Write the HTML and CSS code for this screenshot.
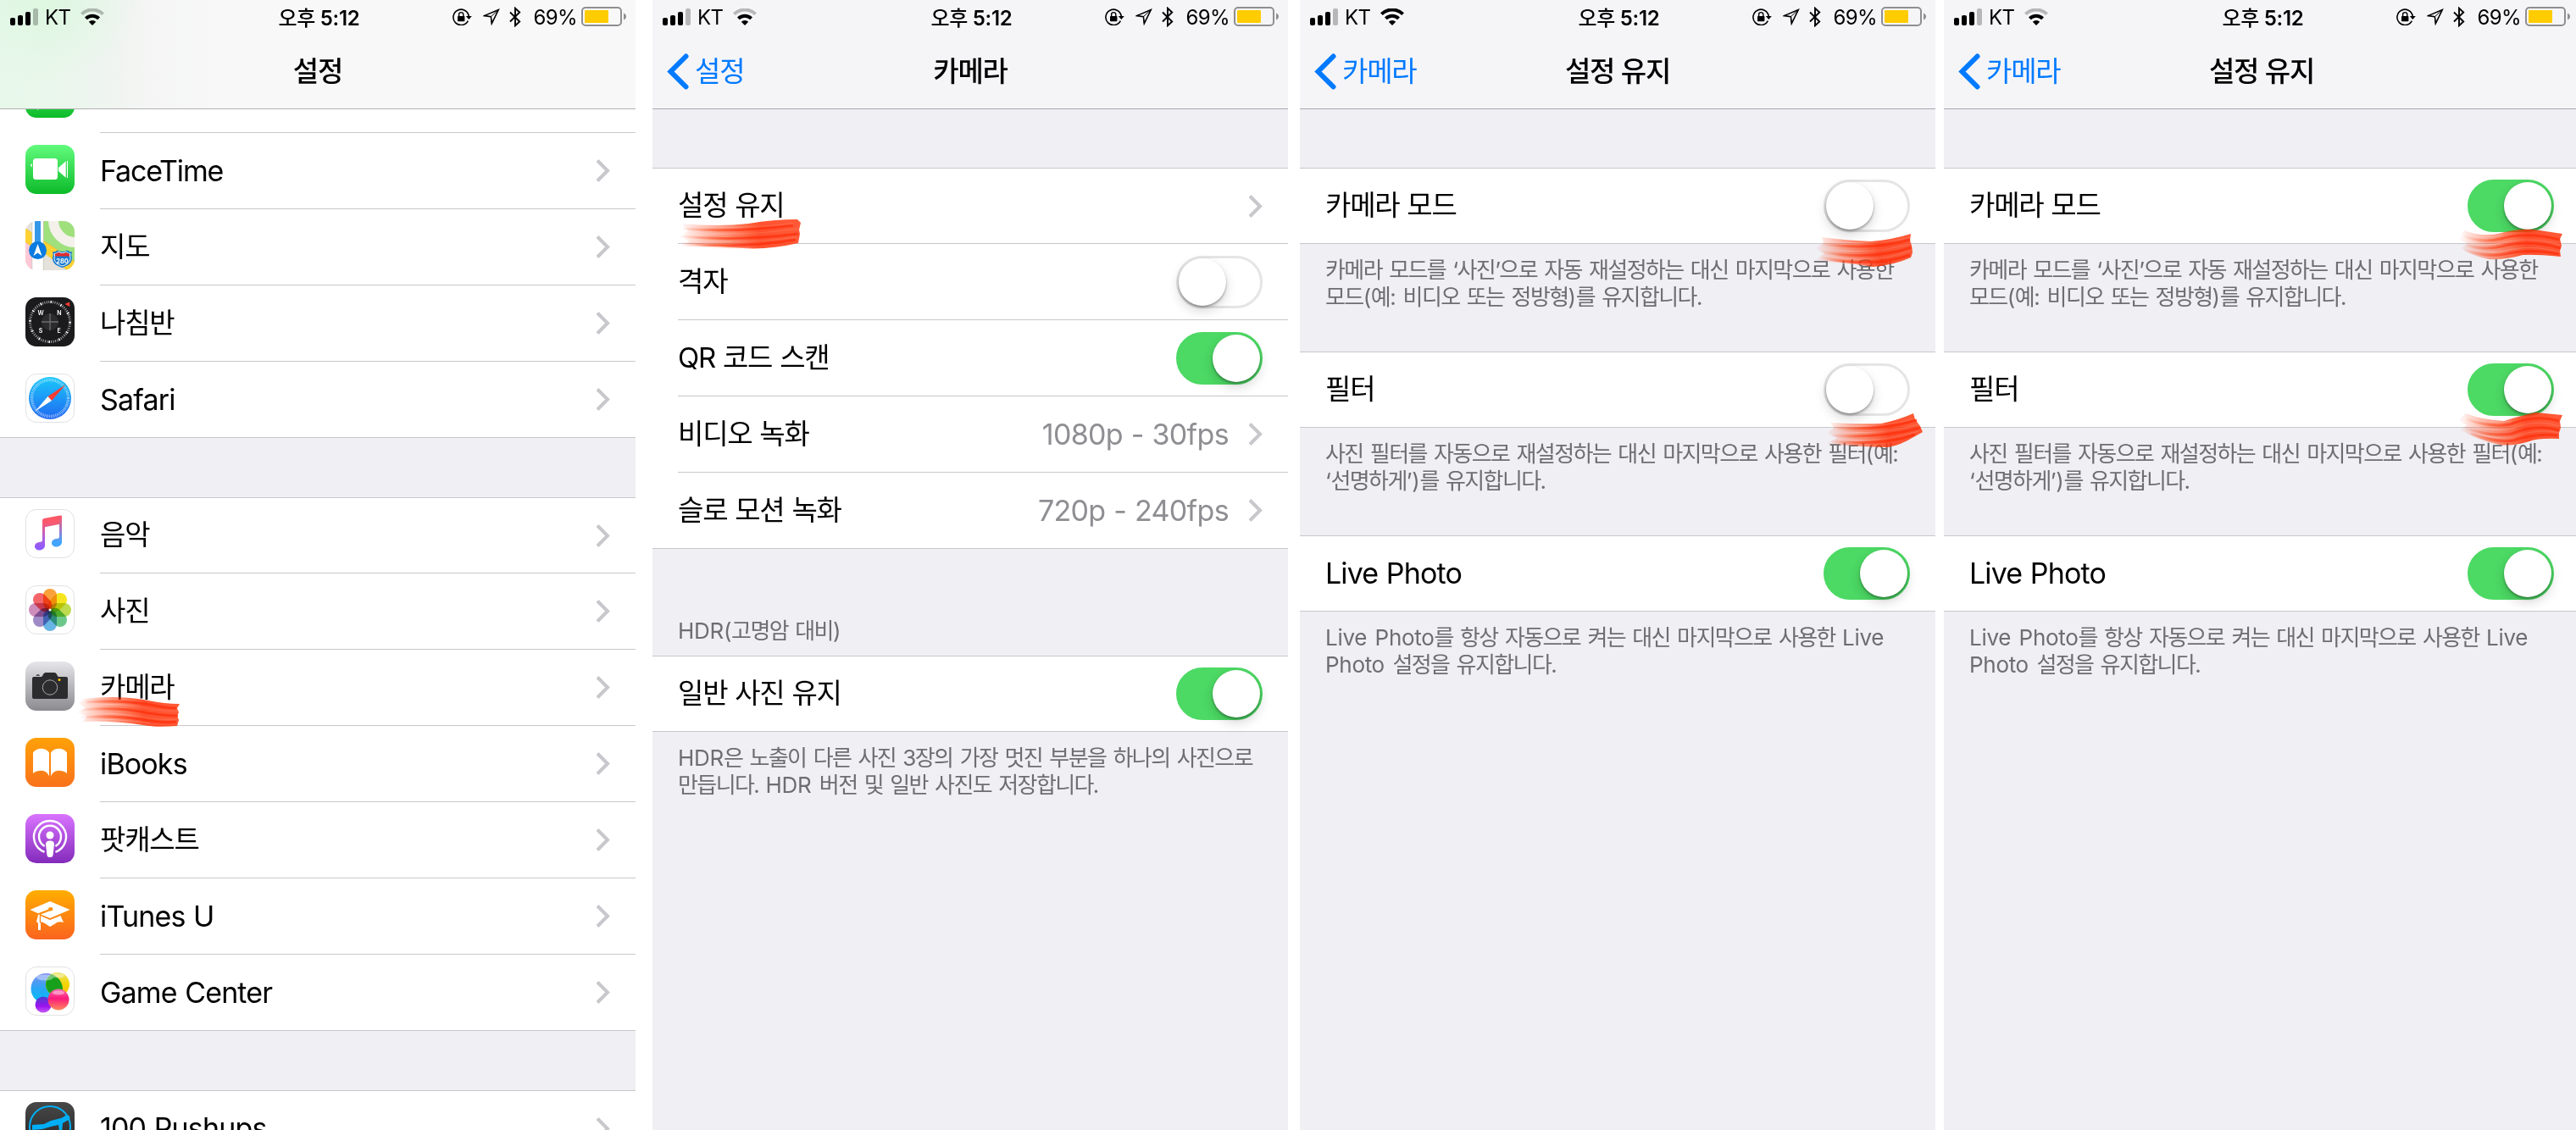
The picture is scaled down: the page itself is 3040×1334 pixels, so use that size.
FILE: index.html
```html
<!DOCTYPE html>
<html lang="ko">
<head>
<meta charset="utf-8">
<title>설정</title>
<link rel="stylesheet" href="styles.css">
</head>
<body>
<svg class="defs" width="0" height="0" aria-hidden="true">
  <defs>
    <linearGradient id="g-green" x1="0" y1="0" x2="0" y2="1"><stop offset="0" stop-color="#62fb7d"/><stop offset="1" stop-color="#0cbb29"/></linearGradient>
    <linearGradient id="g-safari" x1="0" y1="0" x2="0" y2="1"><stop offset="0" stop-color="#1bc8fb"/><stop offset="1" stop-color="#2068f2"/></linearGradient>
    <linearGradient id="g-music" gradientUnits="userSpaceOnUse" x1="32" y1="9" x2="32" y2="46"><stop offset="0" stop-color="#ff5763"/><stop offset=".2" stop-color="#f9596f"/><stop offset=".6" stop-color="#b860d2"/><stop offset="1" stop-color="#8f5bff"/></linearGradient>
    <linearGradient id="g-music2" gradientUnits="userSpaceOnUse" x1="40" y1="9" x2="40" y2="44"><stop offset="0" stop-color="#f9586c"/><stop offset=".45" stop-color="#a078c8"/><stop offset=".85" stop-color="#42a5ff"/></linearGradient>
    <linearGradient id="g-camera" x1="0" y1="0" x2="0" y2="1"><stop offset="0" stop-color="#e5e5ea"/><stop offset="1" stop-color="#8b8a8f"/></linearGradient>
    <linearGradient id="g-books" x1="0" y1="0" x2="0" y2="1"><stop offset="0" stop-color="#ffa108"/><stop offset="1" stop-color="#f9711b"/></linearGradient>
    <linearGradient id="g-pod" x1="0" y1="0" x2="0" y2="1"><stop offset="0" stop-color="#d973ff"/><stop offset="1" stop-color="#832bbb"/></linearGradient>
    <linearGradient id="g-itu" x1="0" y1="0" x2="0" y2="1"><stop offset="0" stop-color="#ffae00"/><stop offset="1" stop-color="#fb631f"/></linearGradient>
    <linearGradient id="g-gcblue" x1="0" y1="0" x2="0" y2="1"><stop offset="0" stop-color="#7f8ff0"/><stop offset=".5" stop-color="#2aa5f5"/><stop offset="1" stop-color="#00c2f5"/></linearGradient>
    <linearGradient id="g-gcyel" x1="0" y1="0" x2="0" y2="1"><stop offset="0" stop-color="#e9e36a"/><stop offset=".5" stop-color="#f3d500"/><stop offset="1" stop-color="#f9b800"/></linearGradient>
    <linearGradient id="g-gcpink" x1="0" y1="0" x2="0" y2="1"><stop offset="0" stop-color="#ff6fb0"/><stop offset=".45" stop-color="#fb1a7c"/><stop offset="1" stop-color="#ff8a5c"/></linearGradient>
    <linearGradient id="g-gcpur" x1="0" y1="0" x2="0" y2="1"><stop offset="0" stop-color="#4a3fd0"/><stop offset=".6" stop-color="#9c12ee"/><stop offset="1" stop-color="#c65cf5"/></linearGradient>
    <linearGradient id="g-dark" x1="0" y1="0" x2="0" y2="1"><stop offset="0" stop-color="#484848"/><stop offset="1" stop-color="#222"/></linearGradient>
    <linearGradient id="ink" x1="0" y1="0" x2="1" y2="0"><stop offset="0" stop-color="#ff3208" stop-opacity="0"/><stop offset=".3" stop-color="#ff3208" stop-opacity=".45"/><stop offset=".65" stop-color="#ff3208" stop-opacity=".85"/><stop offset="1" stop-color="#ff3208" stop-opacity=".8"/></linearGradient>
    <linearGradient id="bristle" x1="0" y1="0" x2="1" y2="0"><stop offset="0" stop-color="#ffd8cf" stop-opacity="0"/><stop offset=".3" stop-color="#ffd0c4" stop-opacity=".6"/><stop offset=".6" stop-color="#ff9a80" stop-opacity=".3"/><stop offset="1" stop-color="#ff9a80" stop-opacity=".3"/></linearGradient>
    <filter id="soft" x="-10%" y="-20%" width="120%" height="140%"><feGaussianBlur stdDeviation=".6"/></filter>
    <clipPath id="tile"><rect width="58" height="58" rx="13"/></clipPath>

    <symbol id="signal" viewBox="0 0 33 20"><rect y="11" width="6" height="9" rx="2"/><rect x="9" y="8" width="6" height="12" rx="2"/><rect x="18" y="4" width="6" height="16" rx="2"/><rect x="27" width="6" height="20" rx="2" opacity=".25"/></symbol>
    <symbol id="wifi" viewBox="0 0 28 20"><path class="arc" d="M1.4 6.6a18 18 0 0 1 25.2 0" fill="none" stroke="currentColor" stroke-width="4"/><path d="M6.4 11.8a10.8 10.8 0 0 1 15.2 0" fill="none" stroke="currentColor" stroke-width="4"/><path d="M14 20l-4.2-4.2a6 6 0 0 1 8.4 0z"/></symbol>
    <symbol id="lock" viewBox="0 0 23 20"><path d="M18.3 14.6A9.2 9.2 0 1 1 19.2 9" fill="none" stroke="currentColor" stroke-width="1.6"/><path d="M15.8 9h7l-3.5 4z"/><rect x="6" y="9" width="8.4" height="6.2" rx=".8"/><path d="M7.6 9.500V7.200a2.600 2.600 0 0 1 5.200 0v2.300" fill="none" stroke="currentColor" stroke-width="1.4"/></symbol>
    <symbol id="loc" viewBox="0 0 20 20"><path d="M18.300 1.500L1.500 8.600l7.900 1.100.9 8.200z" fill="none" stroke="currentColor" stroke-width="1.500"/><path d="M18.300 1.500L9.400 9.700l.9 8.200z" fill="none" stroke="currentColor" stroke-width="1"/></symbol>
    <symbol id="bt" viewBox="0 0 14 24"><path d="M1 6.500l11.200 11L7 22.300V1.700l5.200 4.800L1 17.500" fill="none" stroke="currentColor" stroke-width="1.900"/></symbol>
    <symbol id="battery" viewBox="0 0 54 24"><rect x="1" y="1" width="46" height="21" rx="4" fill="none" stroke="#8f8f92" stroke-width="2"/><rect x="4" y="4" width="28" height="15" rx="1" fill="#fc0"/><path d="M50 7.500c4 1.500 4 6.500 0 8z" fill="#8f8f92"/></symbol>
    <symbol id="chev" viewBox="0 0 17 27"><path d="M2 1.500L14 13.500 2 25.500" fill="none" stroke="#c7c7cc" stroke-width="4"/></symbol>
    <symbol id="back" viewBox="0 0 26 43"><path d="M22.500 3.500L4.500 21.500l18 18" fill="none" stroke="#007aff" stroke-width="6" stroke-linecap="round" stroke-linejoin="miter"/></symbol>
  </defs>
</svg>

<main class="board">

  <!-- Settings root -->
  <section class="phone">
    <header class="bar tinted">
      <div class="status">
        <div class="left"><svg class="i-signal"><use href="#signal"/></svg><span class="carrier">KT</span><svg class="i-wifi weak"><use href="#wifi"/></svg></div>
        <div class="time"><span class="ampm">오후</span> 5:12</div>
        <div class="right"><svg class="i-lock"><use href="#lock"/></svg><svg class="i-loc"><use href="#loc"/></svg><svg class="i-bt"><use href="#bt"/></svg><span class="pct">69%</span><svg class="i-batt"><use href="#battery"/></svg></div>
      </div>
      <div class="nav"><span></span><h1>설정</h1><span></span></div>
    </header>
    <div class="group scrolled">
      <div class="row app"><svg class="icon" viewBox="0 0 58 58"><rect width="58" height="58" rx="13" fill="url(#g-green)"/><path d="M15 44l-1 5 5-3z" fill="#fff"/></svg></div>
      <div class="row app"><svg class="icon" viewBox="0 0 58 58"><rect width="58" height="58" rx="13" fill="url(#g-green)"/><rect x="9" y="16" width="29" height="25" rx="3.500" fill="#fff"/><path d="M39 27l8.700-7.700v19.400L39 31zM49 19h1v20h-1zM7.700 22v4.500l-1.700-2v-1z" fill="#fff"/></svg><span class="label latin tight">FaceTime</span><svg class="chev"><use href="#chev"/></svg></div>
      <div class="row app"><svg class="icon" viewBox="0 0 58 58"><g clip-path="url(#tile)"><path fill="#e4e2da" d="M0 0h58v58H0z"/><path fill="#9fe07c" d="M21 0h37v48L21 23z"/><circle cx="59" cy="-1" r="26" fill="none" stroke="#f3f1ea" stroke-width="12"/><path fill="#ffd233" stroke="#f2b62a" stroke-width=".8" d="M-1 8l59 40v16L-1 24z"/><path fill="#e4e2da" d="M21 37l28 21H21z"/><path fill="#ffc9d6" d="M0 25l8 6v27H0z"/><path fill="#fff" d="M8 0h13v58H8z"/><path fill="#3497e8" d="M11 0h7v27h-7z"/><path d="M7.800 0v58M21.300 0v58" stroke="#c9c6be" stroke-width=".8"/><path fill="#1579cf" d="M32 36.500q4 0 5.500-2 6 3 12 0 1.500 2 5.500 2-1.500 4 0 7c0 7-5.500 9.500-11.500 11.500-6-2-11.500-4.500-11.500-11.500q1.500-3 0-7z"/><path fill="none" stroke="#fff" stroke-width="1" d="M34 38.500q3 0 4.500-2 5 2.500 10 0 1.500 2 4.500 2-1 3 0 5c0 5.500-4.500 8-9.500 9.500-5-1.500-9.500-4-9.500-9.500q1-2 0-5z"/><path fill="#e02d2d" d="M35 38.500q2.500 0 3.700-1.400 4.800 2 9.600 0 1.200 1.400 3.700 1.400v3H35z"/><text x="43.500" y="49.500" font-size="7.500" font-weight="700" fill="#fff" text-anchor="middle">280</text></g><circle cx="14.500" cy="34.500" r="10.500" fill="#0a7be0"/><path fill="#fff" d="M14.500 27l5 14-5-3.500-5 3.500z"/></svg><span class="label">지도</span><svg class="chev"><use href="#chev"/></svg></div>
      <div class="row app"><svg class="icon" viewBox="0 0 58 58"><rect width="58" height="58" rx="13" fill="#1b1b1d"/><circle cx="29" cy="29" r="10" fill="#2b2b2d"/><path d="M29 19v20M19 29h20" stroke="#6d6d6f" stroke-width="1.300"/><circle cx="29" cy="29" r="23.500" fill="none" stroke="#b4b4b6" stroke-width="3" stroke-dasharray=".9 1.561"/><circle cx="29" cy="29" r="23.500" fill="none" stroke="#fff" stroke-width="3" stroke-dasharray="1.400 10.904"/><path fill="#ff3b30" d="M46.500 8l5.500-2.500.3 5.500z"/><g fill="#fff" font-size="7" font-weight="600" text-anchor="middle"><text x="18" y="21">W</text><text x="40" y="21">N</text><text x="18" y="42">S</text><text x="39.500" y="42">E</text></g></svg><span class="label">나침반</span><svg class="chev"><use href="#chev"/></svg></div>
      <div class="row app"><svg class="icon" viewBox="0 0 58 58"><rect x=".5" y=".5" width="57" height="57" rx="12.500" fill="#fff" stroke="#e2e2e4"/><circle cx="29" cy="29" r="25" fill="url(#g-safari)"/><circle cx="29" cy="29" r="21.500" fill="none" stroke="#fff" stroke-opacity=".7" stroke-width="3.500" stroke-dasharray=".7 1.176"/><path fill="#ff3b30" d="M47.500 13L26.500 27l4.500 5z"/><path fill="#fff" d="M11.500 44.500L26.500 27l4.500 5z"/></svg><span class="label latin">Safari</span><svg class="chev"><use href="#chev"/></svg></div>
    </div>
    <div class="group">
      <div class="row app"><svg class="icon" viewBox="0 0 58 58"><rect x=".5" y=".5" width="57" height="57" rx="12.500" fill="#fff" stroke="#e2e2e4"/><path fill="url(#g-music)" d="M20 13.500q0-2 2-2.400L41 7.600q2-.3 2 1.400v8.200l-20 4V43c0 3-3 5.500-6.500 5.500-3.300 0-5.500-2-5.500-4.500 0-2.800 2.500-4.500 5.500-4.900 2.700-.3 3.500-.8 3.500-2.600z"/><path fill="url(#g-music2)" d="M40 9l3-1v31c0 3-3 5.500-6.500 5.500-3.300 0-5.500-2-5.500-4.500 0-2.800 2.500-4.500 5.500-4.900 2.700-.3 3.500-.8 3.500-2.600z"/></svg><span class="label">음악</span><svg class="chev"><use href="#chev"/></svg></div>
      <div class="row app"><svg class="icon" viewBox="0 0 58 58"><rect x=".5" y=".5" width="57" height="57" rx="12.500" fill="#fff" stroke="#e2e2e4"/><g class="petals"><rect x="21" y="4" width="16" height="25" rx="8" fill="#f9a13a"/><rect x="21" y="4" width="16" height="25" rx="8" fill="#f6e41f" transform="rotate(45 29 29)"/><rect x="21" y="4" width="16" height="25" rx="8" fill="#bedb4f" transform="rotate(90 29 29)"/><rect x="21" y="4" width="16" height="25" rx="8" fill="#6cc78b" transform="rotate(135 29 29)"/><rect x="21" y="4" width="16" height="25" rx="8" fill="#68b4e4" transform="rotate(180 29 29)"/><rect x="21" y="4" width="16" height="25" rx="8" fill="#9d8ac6" transform="rotate(225 29 29)"/><rect x="21" y="4" width="16" height="25" rx="8" fill="#cf8dbb" transform="rotate(270 29 29)"/><rect x="21" y="4" width="16" height="25" rx="8" fill="#f4656a" transform="rotate(315 29 29)"/></g><circle cx="29" cy="29" r="1.500" fill="#fff"/></svg><span class="label">사진</span><svg class="chev"><use href="#chev"/></svg></div>
      <div class="row app"><svg class="icon" viewBox="0 0 58 58"><rect width="58" height="58" rx="13" fill="url(#g-camera)"/><path fill="#2c2c2e" d="M10 18h7.500c2 0 2.500-.8 3.200-2.300.8-1.900 1.600-2.700 3.300-2.700h10c1.700 0 2.500.8 3.300 2.700.7 1.500 1.200 2.300 3.200 2.300H48q2 0 2 2v22q0 2-2 2H10q-2 0-2-2V20q0-2 2-2zM12.500 16.700q.3-1.500 1.500-1.500h1.500q1.200 0 1.500 1.500z"/><circle cx="29" cy="30.500" r="8.700" fill="none" stroke="#a9a9ab"/><circle cx="40" cy="21.500" r="1.500" fill="#ffc800"/></svg><span class="label">카메라</span><svg class="chev"><use href="#chev"/></svg></div>
      <div class="row app"><svg class="icon" viewBox="0 0 58 58"><rect width="58" height="58" rx="13" fill="url(#g-books)"/><path fill="#fff" d="M9 17.500c2-3 5.500-4.800 9.500-4.800s7.800 1.900 9.500 4.800v28c-1.500-4-5-6.700-9.500-6.700-3.600 0-7 1-9.500 3.200zM49 17.500c-2-3-5.500-4.800-9.500-4.800S31.700 14.600 30 17.500v28c1.500-4 5-6.700 9.500-6.700 3.600 0 7 1 9.500 3.200z"/></svg><span class="label latin">iBooks</span><svg class="chev"><use href="#chev"/></svg></div>
      <div class="row app"><svg class="icon" viewBox="0 0 58 58"><rect width="58" height="58" rx="13" fill="url(#g-pod)"/><g fill="none" stroke="#fff" stroke-width="2.400"><path d="M22.500 44.800a19 19 0 1 1 13 0"/><path d="M22.600 38a13 13 0 1 1 12.800 0"/></g><circle cx="29" cy="25" r="4.500" fill="#fff"/><path fill="#fff" d="M24 36c0-3.500 2-4.500 5-4.500s5 1 5 4.500l-1.500 12.500c-.3 2-1.500 2.500-3.500 2.500s-3.200-.5-3.500-2.500z"/></svg><span class="label">팟캐스트</span><svg class="chev"><use href="#chev"/></svg></div>
      <div class="row app"><svg class="icon" viewBox="0 0 58 58"><rect width="58" height="58" rx="13" fill="url(#g-itu)"/><path fill="#fff" d="M29 13l23.500 10L29 33 18 28.500l11-4.200a2.600 2.200 0 1 0-1.800-1.700L15 27.300 5.500 23zM18 30.300L29 35l12.500-5 3.500 8c-4.500-1.500-7.500-.5-10 1.500L29 43l-5.500-3.500c-2-1.500-3.500-2-5.500-2zM15 29l1.800-.6V38l1.200 1v8h-3v-8l-2-2z"/></svg><span class="label latin">iTunes U</span><svg class="chev"><use href="#chev"/></svg></div>
      <div class="row app"><svg class="icon" viewBox="0 0 58 58"><rect x=".5" y=".5" width="57" height="57" rx="12.500" fill="#fff" stroke="#e2e2e4"/><circle cx="24.500" cy="26" r="18" fill="url(#g-gcblue)"/><circle cx="38" cy="21" r="14" fill="url(#g-gcyel)"/><path d="M26.500 13A14 14 0 0 0 42.200 34.300 18 18 0 0 0 31 9.200a14 14 0 0 0-4.500 3.800z" fill="#18a01c"/><circle cx="21" cy="45" r="9.500" fill="url(#g-gcpur)"/><circle cx="39" cy="39" r="12.500" fill="url(#g-gcpink)"/><g fill="#fff" opacity=".4"><ellipse cx="23" cy="13" rx="10" ry="3.500"/><ellipse cx="38" cy="11" rx="8" ry="2.500"/><ellipse cx="39" cy="31" rx="7" ry="2.500"/></g></svg><span class="label latin">Game Center</span><svg class="chev"><use href="#chev"/></svg></div>
    </div>
    <div class="group">
      <div class="row app"><svg class="icon" viewBox="0 0 58 58"><rect width="58" height="58" rx="13" fill="url(#g-dark)"/><circle cx="29" cy="29" r="24" fill="none" stroke="#00aef5" stroke-width="2"/><path fill="#00aef5" d="M8 27l14-1 8-4 12-3 4-2c1-2 5-2 6 0s0 5-3 5l-5 3-1 10h-3l-1-8-9 2-10 3-12 1z"/></svg><span class="label latin">100 Pushups</span><svg class="chev"><use href="#chev"/></svg></div>
    </div>
  </section>

  <!-- Camera -->
  <section class="phone second">
    <header class="bar">
      <div class="status">
        <div class="left"><svg class="i-signal"><use href="#signal"/></svg><span class="carrier">KT</span><svg class="i-wifi weak"><use href="#wifi"/></svg></div>
        <div class="time"><span class="ampm">오후</span> 5:12</div>
        <div class="right"><svg class="i-lock"><use href="#lock"/></svg><svg class="i-loc"><use href="#loc"/></svg><svg class="i-bt"><use href="#bt"/></svg><span class="pct">69%</span><svg class="i-batt"><use href="#battery"/></svg></div>
      </div>
      <div class="nav"><span class="back"><svg><use href="#back"/></svg>설정</span><h1>카메라</h1><span></span></div>
    </header>
    <div class="group">
      <div class="row"><span class="label">설정 유지</span><svg class="chev"><use href="#chev"/></svg></div>
      <div class="row"><span class="label">격자</span><span class="toggle"></span></div>
      <div class="row"><span class="label">QR 코드 스캔</span><span class="toggle on"></span></div>
      <div class="row"><span class="label">비디오 녹화</span><span class="value">1080p - 30fps</span><svg class="chev"><use href="#chev"/></svg></div>
      <div class="row"><span class="label">슬로 모션 녹화</span><span class="value">720p - 240fps</span><svg class="chev"><use href="#chev"/></svg></div>
    </div>
    <h2 class="section-head"><span class="en">HDR(</span>고명암 대비<span class="en">)</span></h2>
    <div class="group flush">
      <div class="row"><span class="label">일반 사진 유지</span><span class="toggle on"></span></div>
    </div>
    <p class="note"><span class="en">HDR</span>은 노출이 다른 사진 3장의 가장 멋진 부분을 하나의 사진으로<br>만듭니다. <span class="en">HDR </span>버전 및 일반 사진도 저장합니다.</p>
  </section>

  <!-- Preserve settings, before -->
  <section class="phone third">
    <header class="bar">
      <div class="status">
        <div class="left"><svg class="i-signal"><use href="#signal"/></svg><span class="carrier">KT</span><svg class="i-wifi"><use href="#wifi"/></svg></div>
        <div class="time"><span class="ampm">오후</span> 5:12</div>
        <div class="right"><svg class="i-lock"><use href="#lock"/></svg><svg class="i-loc"><use href="#loc"/></svg><svg class="i-bt"><use href="#bt"/></svg><span class="pct">69%</span><svg class="i-batt"><use href="#battery"/></svg></div>
      </div>
      <div class="nav"><span class="back"><svg><use href="#back"/></svg>카메라</span><h1>설정 유지</h1><span></span></div>
    </header>
    <div class="group"><div class="row"><span class="label">카메라 모드</span><span class="toggle"></span></div></div>
    <p class="note">카메라 모드를 ‘사진’으로 자동 재설정하는 대신 마지막으로 사용한<br>모드<span class="en">(</span>예<span class="en">:</span> 비디오 또는 정방형<span class="en">)</span>를 유지합니다.</p>
    <div class="group flush"><div class="row"><span class="label">필터</span><span class="toggle"></span></div></div>
    <p class="note">사진 필터를 자동으로 재설정하는 대신 마지막으로 사용한 필터<span class="en">(</span>예<span class="en">:</span><br><span class="en">‘</span>선명하게<span class="en">’)</span>를 유지합니다.</p>
    <div class="group flush"><div class="row"><span class="label latin">Live Photo</span><span class="toggle on"></span></div></div>
    <p class="note"><span class="en">Live Photo</span>를 항상 자동으로 켜는 대신 마지막으로 사용한 <span class="en">Live</span><br><span class="en">Photo </span>설정을 유지합니다.</p>
  </section>

  <!-- Preserve settings, after -->
  <section class="phone fourth">
    <header class="bar">
      <div class="status">
        <div class="left"><svg class="i-signal"><use href="#signal"/></svg><span class="carrier">KT</span><svg class="i-wifi weak"><use href="#wifi"/></svg></div>
        <div class="time"><span class="ampm">오후</span> 5:12</div>
        <div class="right"><svg class="i-lock"><use href="#lock"/></svg><svg class="i-loc"><use href="#loc"/></svg><svg class="i-bt"><use href="#bt"/></svg><span class="pct">69%</span><svg class="i-batt"><use href="#battery"/></svg></div>
      </div>
      <div class="nav"><span class="back"><svg><use href="#back"/></svg>카메라</span><h1>설정 유지</h1><span></span></div>
    </header>
    <div class="group"><div class="row"><span class="label">카메라 모드</span><span class="toggle on"></span></div></div>
    <p class="note">카메라 모드를 ‘사진’으로 자동 재설정하는 대신 마지막으로 사용한<br>모드<span class="en">(</span>예<span class="en">:</span> 비디오 또는 정방형<span class="en">)</span>를 유지합니다.</p>
    <div class="group flush"><div class="row"><span class="label">필터</span><span class="toggle on"></span></div></div>
    <p class="note">사진 필터를 자동으로 재설정하는 대신 마지막으로 사용한 필터<span class="en">(</span>예<span class="en">:</span><br><span class="en">‘</span>선명하게<span class="en">’)</span>를 유지합니다.</p>
    <div class="group flush"><div class="row"><span class="label latin">Live Photo</span><span class="toggle on"></span></div></div>
    <p class="note"><span class="en">Live Photo</span>를 항상 자동으로 켜는 대신 마지막으로 사용한 <span class="en">Live</span><br><span class="en">Photo </span>설정을 유지합니다.</p>
  </section>

  <!-- Red marker strokes drawn over the screens -->
  <svg class="marks" viewBox="0 0 3040 1334" filter="url(#soft)">
    <g fill="url(#ink)">
      <path d="M100 825q40-5 75 2 20 4 37 4l-3 5 2 5-2 4 2 5-2 7q-25 2-40-1-40-6-72-4l6-6-12-5 10-5-8-6z"/>
      <path d="M803 264q45 4 80 0 30-5 58-5l4 4-2 8 1 5-2 11q-35 8-65 6-35-3-74-2l10-6-9-6 8-7z"/>
      <path d="M2150 280q30 4 58 5 25-2 47-9l-1 8 2 6 1 8-2 6q-20 9-45 11-30-5-67-8l10-8-11-6 10-6z"/>
      <path d="M2160 499q35 2 60 1 20-4 38-12l2 7 6 8 3 7-9 5q-18 11-32 13-40-1-73-4l13-7-12-6 8-6z"/>
      <path d="M2908 272q20 8 40 4 20-6 42-5l34 5-3 6 2 8-2 6 1 7q-30-3-45-2-20 6-40 5-20-4-33-13l8-5-10-6z"/>
      <path d="M2910 488q20 8 45 9 22-7 38-10l31 3-3 7 1 8-2 6v7q-25-1-35 3-20 6-35 4-25-5-47-18l8-5-10-6z"/>
    </g>
    <g fill="none" stroke="url(#ink)" stroke-width="3">
      <path d="M102 829q40-3 76 3 18 4 30 4M96 838q45-4 80 4 20 3 34 3M94 847q45-3 84 4 18 3 30 1"/>
      <path d="M806 270q60 5 130-4M802 279q70 6 140-3M804 287q70 7 135-4"/>
      <path d="M2150 288q60 8 104-5M2148 297q60 11 108-5M2150 304q58 13 104-3"/>
      <path d="M2164 505q55 4 98-9M2160 514q60 4 106-9M2160 521q60 6 100-8"/>
      <path d="M2908 279q20 8 43 3 30-9 70 1M2906 288q22 8 46 3 32-9 70 2M2908 295q26 9 48 5 30-7 64 0"/>
      <path d="M2910 495q30 10 52 6 30-12 58-4M2908 505q32 11 56 7 30-12 56-4M2916 512q30 11 50 8 28-9 52-6"/>
    </g>
    <g fill="none" stroke="url(#bristle)" stroke-width="1.200">
      <path d="M100 833q42-4 78 4 18 3 32 2M96 843q42-3 80 5 18 2 33 1M98 850q42-2 80 4"/>
      <path d="M806 266q70 5 130-2M802 274q70 6 140-4M804 283q70 6 136-3M806 290q50 4 80 2"/>
      <path d="M2150 284q60 7 104-4M2148 293q60 9 106-5M2150 301q60 12 104-5M2152 308q30 4 56 4"/>
      <path d="M2160 502q60 4 98-8M2162 510q60 4 102-9M2160 518q60 6 104-9"/>
      <path d="M2908 275q22 8 46 2M2906 284q22 8 46 3 32-9 69 2M2908 292q24 8 48 4 32-8 66 2"/>
      <path d="M2912 491q30 10 52 6M2908 500q32 11 56 6 30-12 56-3M2912 508q32 12 54 8 30-11 54-5"/>
    </g>
  </svg>
</main>
</body>
</html>
```
FILE: styles.css
```css
* { box-sizing: border-box; margin: 0; padding: 0; }

body {
  width: 3040px;
  height: 1334px;
  overflow: hidden;
  background: #fff;
  color: #000;
  font-family: Inter, "Noto Sans CJK KR", sans-serif;
}

svg { display: block; flex: none; overflow: visible; }
.defs { position: absolute; }

.board {
  position: relative;
  display: flex;
  width: 3040px;
  height: 1334px;
  overflow: hidden;
}

.phone {
  flex: none;
  width: 750px;
  height: 1334px;
  overflow: hidden;
  background: #efeff4;
}
.second { margin-left: 20px; }
.third { margin-left: 14px; }
.fourth { margin-left: 10px; }

/* status + navigation bar */
.bar {
  position: relative;
  z-index: 1;
  height: 129px;
  background: #f5f5f8;
  border-bottom: 1px solid #a9a9ae;
}
.bar.tinted {
  background:
    radial-gradient(ellipse 110px 90px at 55px 5px, rgba(220, 247, 223, .9) 0, rgba(226, 247, 229, 0) 100%),
    linear-gradient(90deg, #e8f8eb 0, #eaf7ec 60px, #eff4f0 125px, #f4f5f4 175px, #f8f8f9 260px);
  border-bottom-color: #b2b2b2;
}

.status {
  display: grid;
  grid-template-columns: 1fr auto 1fr;
  align-items: center;
  height: 40px;
  padding: 0 11px 0 12px;
  font-size: 24px;
}
.left, .right { display: flex; align-items: center; }
.right { justify-content: flex-end; }
.i-signal { width: 33px; height: 20px; }
.carrier { margin: 0 12px 0 8px; letter-spacing: -.6px; }
.i-wifi { width: 28px; height: 20px; }
.weak { --arc: .25; }
.arc { opacity: var(--arc, 1); }
.time { padding-bottom: 2px; font-weight: 600; letter-spacing: -.3px; transform: translateX(1px); }
.ampm { font-weight: 500; }
.i-lock { width: 23px; height: 20px; margin-right: 13px; }
.i-loc { width: 20px; height: 20px; margin-right: 11px; }
.i-bt { width: 14px; height: 24px; margin-right: 14px; }
.pct { margin-right: 5px; letter-spacing: -.6px; }
.i-batt { width: 54px; height: 24px; margin-right: -1px; }

.nav {
  display: grid;
  grid-template-columns: 1fr auto 1fr;
  align-items: center;
  height: 88px;
  font-size: 33px;
  letter-spacing: -1.2px;
}
.nav h1 { font-size: 33px; font-weight: 500; line-height: 48px; }
.back { display: flex; align-items: center; gap: 7px; padding-left: 17px; color: #007aff; line-height: 48px; }
.back svg { width: 26px; height: 43px; }

/* grouped table */
.group { margin-top: 70px; background: #fff; position: relative; border-top: 1px solid #c8c7cc; }
.bar + .group { margin-top: 69px; }
.bar + .group.scrolled { margin-top: -62px; }
.group.flush { margin-top: 0; }
.row {
  position: relative;
  display: flex;
  align-items: center;
  height: 90px;
  margin-left: 30px;
  padding-right: 30px;
  border-bottom: 1px solid #c8c7cc;
  font-size: 33px;
  letter-spacing: -1.2px;
  word-spacing: .8px;
}
.row:first-child { height: 89px; }
.row:last-child { margin-left: 0; padding-left: 30px; }
.row.app { margin-left: 118px; padding-left: 0; }
.row.app:last-child { margin-left: 0; padding-left: 118px; }
.icon { position: absolute; left: -88px; top: 14px; width: 58px; height: 58px; }
.row.app:first-child .icon { top: 13px; }
.row.app:last-child .icon { left: 30px; }
.icon text { letter-spacing: 0; }
.petals rect { mix-blend-mode: multiply; }
.petals { isolation: isolate; }

.label { flex: 1; padding-bottom: 2px; line-height: 48px; white-space: nowrap; }
.latin { padding-bottom: 0; font-size: 34px; letter-spacing: -.85px; }
.tight { letter-spacing: -1.2px; }
.value { color: #8e8e93; font-size: 34px; letter-spacing: -.65px; margin-right: 23px; }
.chev { width: 17px; height: 27px; }

.toggle {
  position: relative;
  width: 102px;
  height: 62px;
  border: 3px solid #e5e5e5;
  border-radius: 31px;
}
.toggle::after {
  content: "";
  display: block;
  width: 56px;
  height: 56px;
  border-radius: 50%;
  background: #fff;
  box-shadow: 0 6px 14px rgba(0, 0, 0, .16), 0 2px 3px rgba(0, 0, 0, .32);
}
.toggle.on { background: #4cd964; border-color: #4cd964; }
.toggle.on::after { margin-left: 40px; }

.section-head {
  height: 126px;
  padding: 81px 30px 0;
  color: #6d6d72;
  font-size: 26px;
  font-weight: 400;
  line-height: 32px;
  letter-spacing: -1.6px;
  word-spacing: 2.5px;
}
.note {
  height: 127px;
  padding: 15px 30px 0;
  color: #6d6d72;
  font-size: 26px;
  line-height: 32px;
  letter-spacing: -1.6px;
  word-spacing: 2.5px;
  white-space: nowrap;
}
.en { letter-spacing: -.3px; }

.marks { position: absolute; inset: 0; width: 3040px; height: 1334px; z-index: 2; pointer-events: none; }
```
